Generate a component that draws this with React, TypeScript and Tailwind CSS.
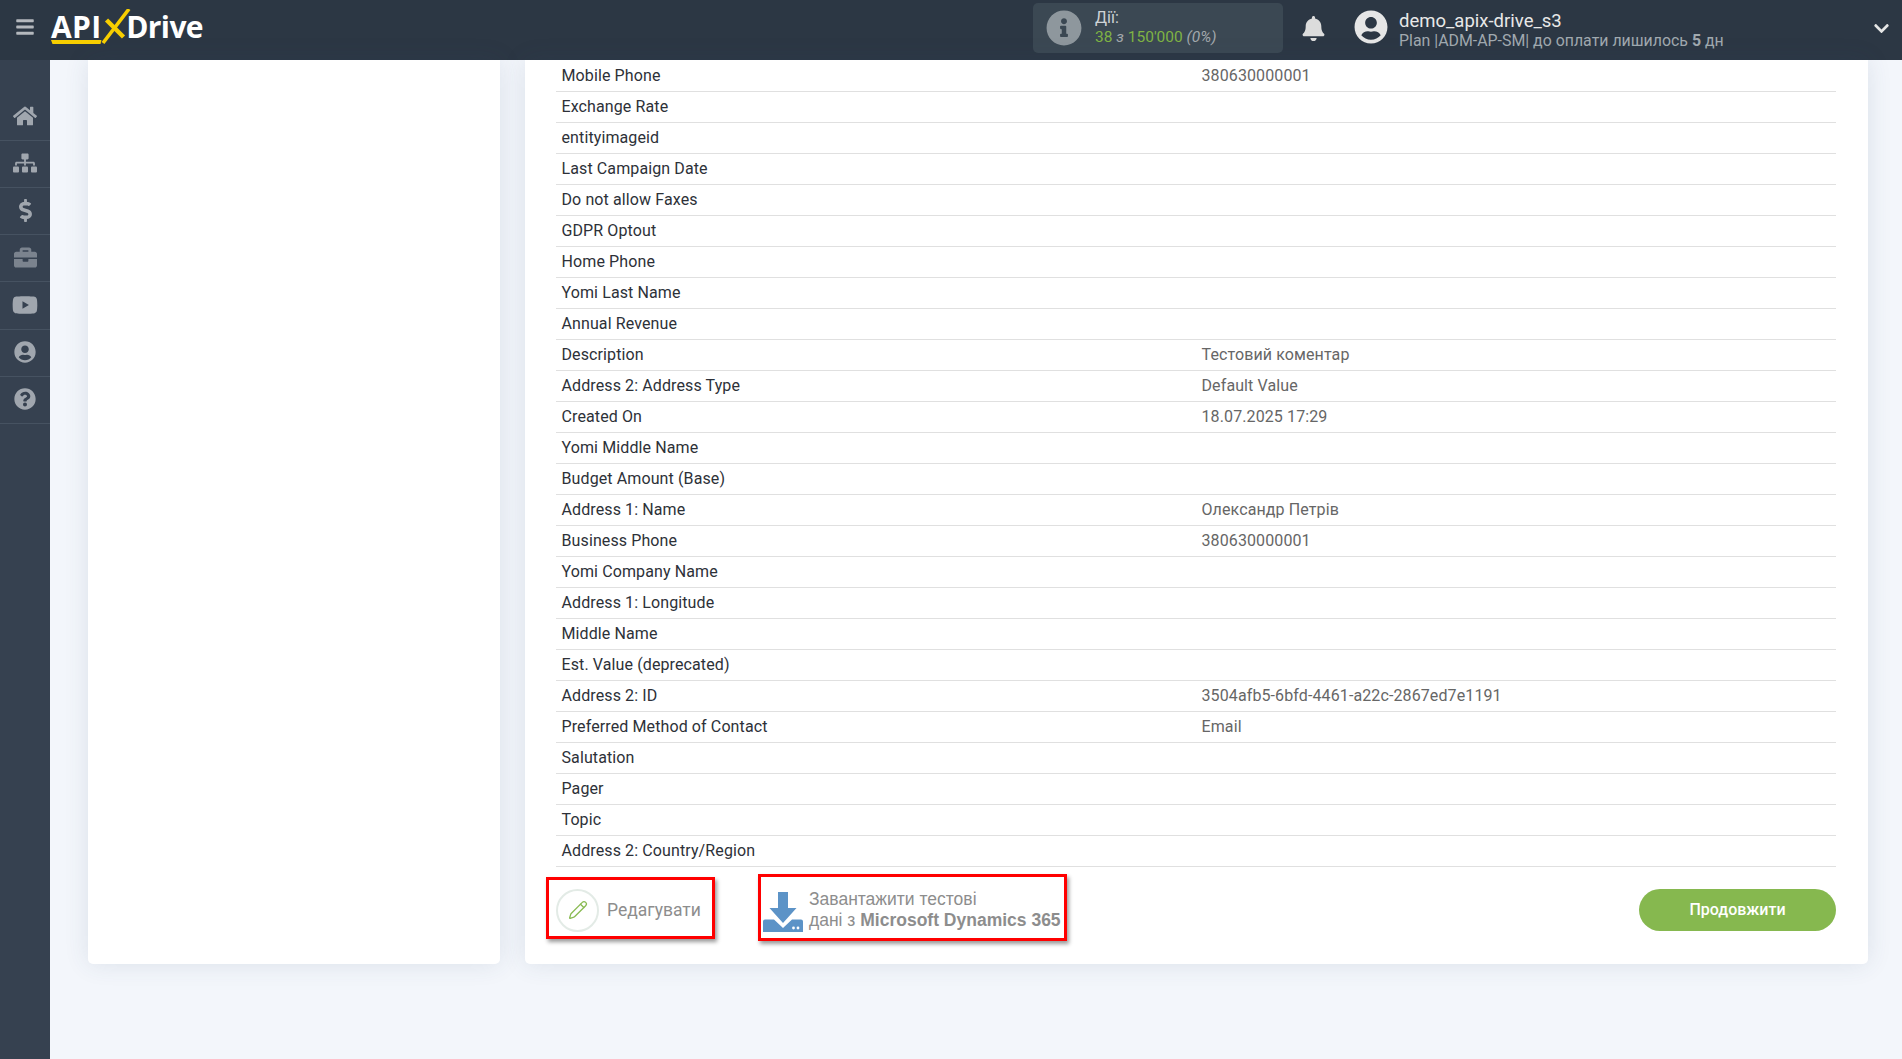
import {
  FaBars,
  FaBell,
  FaBriefcase,
  FaChevronDown,
  FaDollarSign,
  FaHome,
  FaInfoCircle,
  FaQuestionCircle,
  FaSitemap,
  FaUserCircle,
  FaYoutube,
} from "react-icons/fa";
import { Pencil } from "lucide-react";

type Row = {
  label: string;
  value?: string;
};

const rows: Row[] = [
  { label: "Mobile Phone", value: "380630000001" },
  { label: "Exchange Rate" },
  { label: "entityimageid" },
  { label: "Last Campaign Date" },
  { label: "Do not allow Faxes" },
  { label: "GDPR Optout" },
  { label: "Home Phone" },
  { label: "Yomi Last Name" },
  { label: "Annual Revenue" },
  { label: "Description", value: "Тестовий коментар" },
  { label: "Address 2: Address Type", value: "Default Value" },
  { label: "Created On", value: "18.07.2025 17:29" },
  { label: "Yomi Middle Name" },
  { label: "Budget Amount (Base)" },
  { label: "Address 1: Name", value: "Олександр Петрів" },
  { label: "Business Phone", value: "380630000001" },
  { label: "Yomi Company Name" },
  { label: "Address 1: Longitude" },
  { label: "Middle Name" },
  { label: "Est. Value (deprecated)" },
  { label: "Address 2: ID", value: "3504afb5-6bfd-4461-a22c-2867ed7e1191" },
  { label: "Preferred Method of Contact", value: "Email" },
  { label: "Salutation" },
  { label: "Pager" },
  { label: "Topic" },
  { label: "Address 2: Country/Region" },
];

const sideItems = [
  { icon: <FaHome size={24} />, cls: "h-[47px] text-[#a0a6ae]" },
  { icon: <FaSitemap size={24} />, cls: "h-[47px] text-[#a0a6ae]" },
  { icon: <FaDollarSign size={23} />, cls: "h-[47px] text-[#a0a6ae]" },
  { icon: <FaBriefcase size={23} />, cls: "h-[47px] text-[#7b838e]" },
  { icon: <FaYoutube size={26} />, cls: "h-[48px] text-[#a0a6ae]" },
  { icon: <FaUserCircle size={22} />, cls: "h-[47px] text-[#a0a6ae]" },
  { icon: <FaQuestionCircle size={22} />, cls: "h-[47px] text-[#a0a6ae]" },
];

const Logo = () => (
  <div className="relative mt-[-6px] ml-[16px] flex h-[36px] w-[152px] items-center font-['Open_Sans',sans-serif] text-[30px] leading-none font-bold text-white">
    <span className="w-[76px] tracking-[0.4px]">API</span>
    <span className="tracking-[-0.6px]">Drive</span>
    <svg
      className="absolute top-0 left-0"
      width="152"
      height="36"
      viewBox="0 0 152 36"
      fill="none"
    >
      <path d="M0 31H50.5L49.5 35H1.5Z" fill="#f7ce00" />
      <path d="M52 34L78 0" stroke="#f7ce00" strokeWidth="3.6" />
      <path d="M55.5 11L72.5 28" stroke="#f7ce00" strokeWidth="4.4" />
    </svg>
  </div>
);

const Header = () => (
  <header className="flex h-[60px] shrink-0 items-center bg-[#2c3744] font-['Roboto',sans-serif]">
    <FaBars className="mt-[-6px] ml-[15px] text-[#b4b8bd]" size={20} />
    <Logo />
    <div className="mt-[-4px] ml-[830px] flex h-[50px] w-[250px] items-center rounded-[5px] bg-[#3b4853] pl-[13px]">
      <FaInfoCircle className="text-[#8e979d]" size={36} />
      <div className="ml-[13px]">
        <div className="mt-[-1px] text-[16px] leading-[20px] text-[#cfd3d6]">
          Дії:
        </div>
        <div className="text-[15.5px] leading-[19px] text-[#7fb344]">
          38 <span className="text-[#a3a9ad] italic">з</span> 150'000{" "}
          <span className="text-[#a3a9ad] italic">(0%)</span>
        </div>
      </div>
    </div>
    <FaBell className="mt-[-4px] ml-[18px] text-[#dcdcdc]" size={25} />
    <FaUserCircle className="mt-[-6px] ml-[28px] text-[#e6e6e6]" size={34} />
    <div className="ml-[11px] w-[474px]">
      <div className="text-[18.5px] leading-[22px] text-[#e8e8e8]">
        demo_apix-drive_s3
      </div>
      <div className="text-[15.9px] leading-[18px] text-[#a1a9af]">
        Plan |ADM-AP-SM| до оплати лишилось <b className="font-bold">5</b> дн
      </div>
    </div>
    <FaChevronDown className="mt-[-4px] text-[#e6e6e6]" size={17} />
  </header>
);

const Sidebar = () => (
  <aside className="w-[50px] shrink-0 bg-[#364150] pt-[34px]">
    {sideItems.map((item, i) => (
      <div
        key={i}
        className={`flex items-center justify-center border-b border-[#465261] pb-[2px] ${item.cls}`}
      >
        {item.icon}
      </div>
    ))}
  </aside>
);

const DownloadIcon = () => (
  <svg width="40" height="40" viewBox="0 0 40 40" className="mt-[8px] shrink-0">
    <path d="M15 0H25V16H33.5L20 31L6.5 16H15Z" fill="#5c93c7" />
    <path
      d="M2 27.5H11L20 36L29 27.5H38A2 2 0 0 1 40 29.5V40H0V29.5A2 2 0 0 1 2 27.5Z"
      fill="#5c93c7"
    />
    <circle cx="30.5" cy="36" r="1.4" fill="#fff" />
    <circle cx="35" cy="36" r="1.4" fill="#fff" />
  </svg>
);

const Footer = () => (
  <div className="flex h-[97px] font-['Roboto',sans-serif]">
    <button className="mt-[10px] ml-[-10px] flex h-[62px] w-[169px] items-center border-[3px] border-[#ff0000] pt-[4px] pl-[7px] shadow-[2px_3px_4px_rgba(0,0,0,0.4)]">
      <span className="flex h-[43px] w-[43px] items-center justify-center rounded-full border-2 border-[#e3ebe6]">
        <Pencil className="text-[#8abb53]" size={20} strokeWidth={1.6} />
      </span>
      <span className="ml-[8px] text-[17.5px] text-[#8d8d8d]">Редагувати</span>
    </button>
    <button className="mt-[7px] ml-[43px] flex h-[67px] w-[309px] items-center border-[3px] border-[#ff0000] pl-[2px] text-left shadow-[2px_3px_4px_rgba(0,0,0,0.4)]">
      <DownloadIcon />
      <span className="mt-[5px] ml-[6px] font-['Liberation_Sans',sans-serif] text-[17.5px] leading-[21px] whitespace-nowrap text-[#8d8d8d]">
        Завантажити тестові
        <br />
        дані з <b className="font-bold">Microsoft Dynamics 365</b>
      </span>
    </button>
    <button className="mt-[22px] ml-auto h-[42px] w-[197px] rounded-full bg-[#86b84f] text-[16px] font-medium text-white">
      Продовжити
    </button>
  </div>
);

const App = () => {
  return (
    <div className="flex h-[1059px] flex-col overflow-hidden bg-[#f3f6fb]">
      <Header />
      <div className="flex flex-1">
        <Sidebar />
        <main className="flex flex-1 items-start gap-[25px] pr-[34px] pl-[38px]">
          <section className="h-[904px] w-[412px] rounded-b-[5px] bg-white shadow-[0_0_25px_rgba(50,70,110,0.12)]" />
          <section className="h-[904px] flex-1 rounded-b-[5px] bg-white pr-[32px] pl-[31px] shadow-[0_0_25px_rgba(50,70,110,0.12)]">
            <div className="mt-[1px] font-['Roboto',sans-serif] text-[16px] tracking-[0.11px]">
              {rows.map((row) => (
                <div
                  key={row.label}
                  className="flex h-[31px] items-center border-b border-[#e0e0e0] pl-[5.5px]"
                >
                  <span className="w-[640px] text-[#2d3138]">{row.label}</span>
                  <span className="text-[#666666]">{row.value}</span>
                </div>
              ))}
            </div>
            <Footer />
          </section>
        </main>
      </div>
    </div>
  );
};

export default App;
